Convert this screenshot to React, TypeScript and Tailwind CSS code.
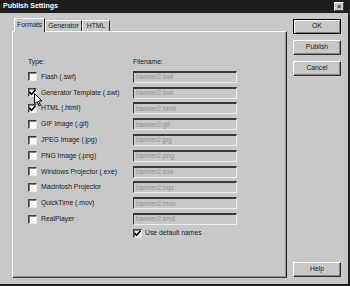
const formats = [
  { label: "Flash  (.swf)", file: "banner2.swf", checked: false },
  { label: "Generator Template (.swt)", file: "banner2.swt", checked: true },
  { label: "HTML (.html)", file: "banner2.html", checked: true },
  { label: "GIF Image (.gif)", file: "banner2.gif", checked: false },
  { label: "JPEG Image (.jpg)", file: "banner2.jpg", checked: false },
  { label: "PNG Image (.png)", file: "banner2.png", checked: false },
  { label: "Windows Projector (.exe)", file: "banner2.exe", checked: false },
  { label: "Macintosh Projector", file: "banner2.hqx", checked: false },
  { label: "QuickTime (.mov)", file: "banner2.mov", checked: false },
  { label: "RealPlayer", file: "banner2.smil", checked: false },
];

function Checkbox({ checked }: { checked: boolean }) {
  return (
    <div className="flex h-[9px] w-[9px] shrink-0 items-center justify-center border-t border-l border-t-[#404040] border-l-[#404040] border-r border-b border-r-[#e8e8e8] border-b-[#e8e8e8] bg-white shadow-[inset_1px_1px_0_#808080]">
      {checked && (
        <svg width="7" height="7" viewBox="0 0 7 7">
          <path d="M0.5 3 L2.5 5.2 L6.5 0.8" stroke="#000" strokeWidth="1.6" fill="none" />
        </svg>
      )}
    </div>
  );
}

function Button({ label, isDefault }: { label: string; isDefault?: boolean }) {
  return (
    <button
      className={`flex h-[15px] w-[48px] items-center justify-center bg-[#c8c8c8] text-[6.8px] text-[#222] ${
        isDefault
          ? "border border-black shadow-[inset_1px_1px_0_#fff,inset_-1px_-1px_0_#808080]"
          : "border-t border-l border-t-white border-l-white border-r border-b border-r-[#303030] border-b-[#303030] shadow-[inset_-1px_-1px_0_#808080]"
      }`}
    >
      {label}
    </button>
  );
}

export default function App() {
  return (
    <div className="relative flex h-[286px] w-[350px] flex-col overflow-hidden border-r-2 border-b-2 border-r-[#202020] border-b-[#202020] bg-[#c8c8c8] font-['Liberation_Sans',Arial,sans-serif] text-[6.8px] text-[#222]">
      {/* Title bar */}
      <div className="flex h-[13px] shrink-0 items-center justify-between bg-[#1e1e1e] pl-[3px] pr-[4px]">
        <span className="text-[7px] font-bold text-white">Publish Settings</span>
        <div className="flex h-[9px] w-[10px] items-center justify-center border-t border-l border-t-white border-l-white border-r border-b border-r-[#404040] border-b-[#404040] bg-[#c8c8c8] text-[7px] leading-none font-bold">
          ×
        </div>
      </div>

      <div className="flex flex-1">
        {/* Tabs + panel */}
        <div className="ml-[12px] mt-[5px] flex w-[275px] flex-col">
          <div className="flex h-[13px] items-end pl-[2px]">
            <div className="relative z-10 -mb-px flex h-[14px] w-[31px] items-center justify-center border-t border-l border-t-white border-l-white border-r border-r-[#303030] bg-[#c8c8c8]">
              Formats
            </div>
            <div className="flex h-[11px] w-[37px] items-center justify-center border-t border-l border-t-white border-l-white border-r border-r-[#303030]">
              Generator
            </div>
            <div className="flex h-[11px] w-[28px] items-center justify-center border-t border-l border-t-white border-l-white border-r border-r-[#303030]">
              HTML
            </div>
          </div>

          <div className="h-[247px] border-t border-l border-t-white border-l-white border-r border-b border-r-[#202020] border-b-[#404040] shadow-[inset_-1px_-1px_0_#909090]">
            <div className="ml-[15px] mt-[23px] flex h-[14px] items-center">
              <span className="w-[105px]">Type:</span>
              <span>Filename:</span>
            </div>
            {formats.map((f) => (
              <div key={f.label} className="ml-[15px] flex h-[15.8px] items-center">
                <div className="flex w-[105px] items-center gap-[4px]">
                  <Checkbox checked={f.checked} />
                  <span>{f.label}</span>
                </div>
                <div className="flex h-[12px] w-[104px] items-center border-t-2 border-l border-t-[#3a3a3a] border-l-[#3a3a3a] border-r border-b border-r-[#eeeeee] border-b-[#eeeeee] pl-[2px] text-[#939393]">
                  {f.file}
                </div>
              </div>
            ))}
            <div className="ml-[120px] mt-[-1px] flex h-[15px] items-center gap-[3px]">
              <Checkbox checked />
              <span>Use default names</span>
            </div>
          </div>
        </div>

        {/* Buttons */}
        <div className="ml-[6px] mt-[6px] mb-[7px] flex flex-col gap-[6px]">
          <Button label="OK" isDefault />
          <Button label="Publish" />
          <Button label="Cancel" />
          <div className="flex-1" />
          <Button label="Help" />
        </div>
      </div>

      {/* Mouse cursor */}
      <svg className="absolute left-[34px] top-[93px]" width="9" height="14" viewBox="0 0 9 14">
        <path d="M0.5 0.5 L0.5 11 L3 8.5 L5 13 L6.5 12.3 L4.6 8 L8 8 Z" fill="#fff" stroke="#000" strokeWidth="1" />
      </svg>
    </div>
  );
}
